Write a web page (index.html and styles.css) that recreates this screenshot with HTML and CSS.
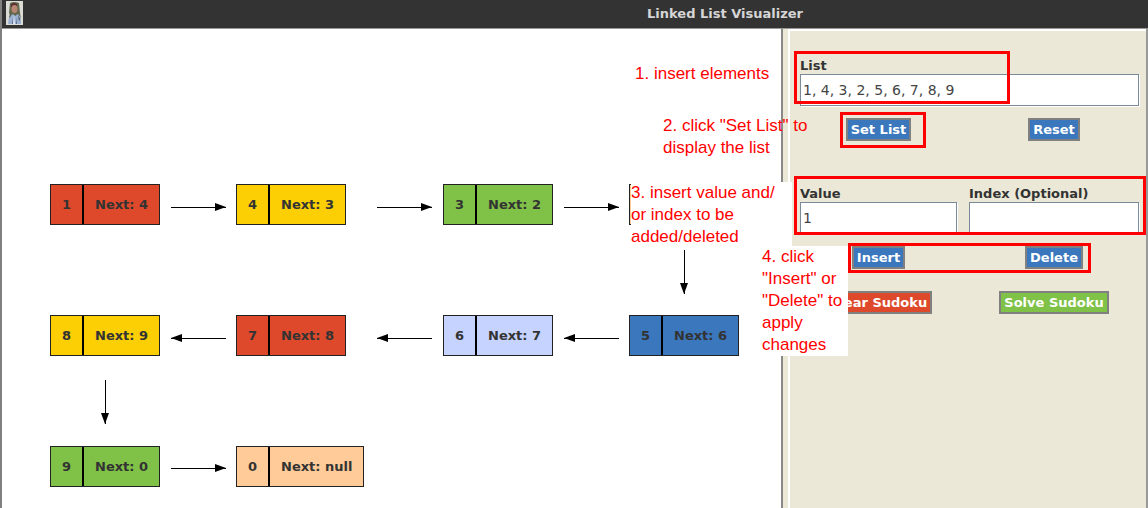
FILE: index.html
```
<!DOCTYPE html>
<html lang="en">
<head>
<meta charset="utf-8">
<title>Linked List Visualizer</title>
<link rel="stylesheet" href="styles.css">
</head>
<body>
<div class="window">
  <header class="titlebar">
    <svg class="portrait" viewBox="0 0 17 24" aria-hidden="true">
      <rect width="17" height="24" fill="#dcdcd6"/>
      <path d="M4 2Q8 0 13 2L14 12L15 18L12 16H5L3 12Z" fill="#62684d"/>
      <path d="M5 3Q8 1 11 3V6H5Z" fill="#5c3030"/>
      <ellipse cx="8.500" cy="8" rx="3" ry="4" fill="#b98573"/>
      <path d="M2 23L3 16L7 13L9 15L12 13L15 17V23Z" fill="#9db1d2"/>
      <path d="M4 13L5 15L3 17ZM12 14L14 18L13 20Z" fill="#3f4a49"/>
      <path d="M6 16L7 23H6ZM10 16L11 23H10Z" fill="#596985"/>
      <path d="M8 14L9 23H7Z" fill="#dfe6f3"/>
    </svg>
    <h1 class="title">Linked List Visualizer</h1>
  </header>
  <main class="content">
    <section class="canvas" aria-label="List diagram">
      <svg class="arrows" aria-hidden="true">
        <defs>
          <marker id="head" markerUnits="userSpaceOnUse" markerWidth="12" markerHeight="10" refX="11" refY="5" orient="auto"><path d="M0 1L11 5L0 9Z"/></marker>
        </defs>
        <g class="lines">
          <path d="M169 178H224" marker-end="url(#head)"/>
          <path d="M375 178H430" marker-end="url(#head)"/>
          <path d="M562 178H617" marker-end="url(#head)"/>
          <path d="M682 221V265" marker-end="url(#head)"/>
          <path d="M617 309H562" marker-end="url(#head)"/>
          <path d="M430 309H375" marker-end="url(#head)"/>
          <path d="M224 309H169" marker-end="url(#head)"/>
          <path d="M103 351V395" marker-end="url(#head)"/>
          <path d="M169 439H224" marker-end="url(#head)"/>
        </g>
      </svg>
      <div class="node row1 col1 red"><span>1</span><span>Next: 4</span></div>
      <div class="node row1 col2 yellow"><span>4</span><span>Next: 3</span></div>
      <div class="node row1 col3 green"><span>3</span><span>Next: 2</span></div>
      <div class="node row1 col4 peach"><span></span><span></span></div>
      <div class="node row2 col4 blue"><span>5</span><span>Next: 6</span></div>
      <div class="node row2 col3 lilac"><span>6</span><span>Next: 7</span></div>
      <div class="node row2 col2 red"><span>7</span><span>Next: 8</span></div>
      <div class="node row2 col1 yellow"><span>8</span><span>Next: 9</span></div>
      <div class="node row3 col1 green"><span>9</span><span>Next: 0</span></div>
      <div class="node row3 col2 peach"><span>0</span><span>Next: null</span></div>
      <p class="note note-1">1. insert elements</p>
      <p class="note note-2">2. click "Set List" to<br>display the list</p>
      <p class="note note-3">3. insert value and/<br>or index to be<br>added/deleted</p>
      <p class="note note-4">4. click<br>"Insert" or<br>"Delete" to<br>apply<br>changes</p>
    </section>
    <aside class="side">
      <form class="panel">
        <div class="field wide">
          <label for="list">List</label>
          <input id="list" type="text" value="1, 4, 3, 2, 5, 6, 7, 8, 9">
        </div>
        <button class="blue" type="button">Set List</button>
        <button class="blue" type="button">Reset</button>
        <div class="field lower">
          <label for="value">Value</label>
          <input id="value" type="text" value="1">
        </div>
        <div class="field lower">
          <label for="index">Index (Optional)</label>
          <input id="index" type="text">
        </div>
        <button class="blue" type="button">Insert</button>
        <button class="blue" type="button">Delete</button>
        <button class="red last" type="button">Clear Sudoku</button>
        <button class="green last" type="button">Solve Sudoku</button>
        <div class="mark mark-list"></div>
        <div class="mark mark-set"></div>
        <div class="mark mark-value"></div>
        <div class="mark mark-actions"></div>
      </form>
    </aside>
  </main>
</div>
</body>
</html>
```
FILE: styles.css
```
* { box-sizing: border-box; }
body {
  margin: 0;
  background: #fff;
  color: #333;
  font: bold 13px/16px "DejaVu Sans", sans-serif;
}
.window {
  display: flex;
  flex-direction: column;
  min-height: 100vh;
  border-left: 2px solid #808080;
}
.titlebar {
  display: flex;
  align-items: center;
  height: 28px;
  padding-left: 4px;
  background: #333;
}
.portrait { width: 17px; height: 24px; margin-bottom: 2px; }
.title {
  flex: 1;
  margin: 0;
  padding-left: 279px;
  color: #d6d6d6;
  font-size: 13px;
  text-align: center;
}
.content {
  display: flex;
  flex: 1;
  border-top: 1px solid #999;
}
.canvas {
  position: relative;
  z-index: 1;
  flex: 1;
  background: #fff;
}
.arrows { position: absolute; width: 100%; height: 100%; }
.lines { fill: none; stroke: #000; shape-rendering: crispEdges; }
marker path { fill: #000; stroke: none; shape-rendering: auto; }

.node {
  position: absolute;
  display: flex;
  min-width: 110px;
  height: 41px;
  border: 1px solid #222;
  line-height: 39px;
}
.node span:first-child {
  width: 33px;
  border-right: 2px solid #000;
  text-align: center;
}
.node span:last-child { flex: 1; padding: 0 11px; white-space: nowrap; }
.row1 { top: 155px; }
.row2 { top: 286px; }
.row3 { top: 417px; }
.col1 { left: 48px; }
.col2 { left: 234px; }
.col3 { left: 441px; }
.col4 { left: 627px; }

.red { background: #de492b; }
.yellow { background: #fbcf04; }
.green { background: #80c147; }
.blue { background: #3a77bd; }
.lilac { background: #c7d3ff; }
.peach { background: #ffcc99; }

.note {
  position: absolute;
  margin: 0;
  color: #f00;
  font: 17px/22px "Liberation Sans", sans-serif;
  white-space: nowrap;
}
.note-1 { top: 34px; left: 633px; }
.note-2 { top: 86px; left: 661px; }
.note-3 { top: 153px; left: 629px; width: 161px; height: 65px; background: #fff; }
.note-4 { top: 217px; left: 760px; width: 86px; background: #fff; }

.side {
  width: 367px;
  padding-left: 5px;
  border-left: 2px solid #888;
  border-right: 2px solid #999;
  background: #ebe8d7;
}
.panel {
  position: relative;
  display: grid;
  grid-template-columns: 157fr 170fr;
  gap: 12px;
  align-content: start;
  justify-items: center;
  height: 100%;
  padding: 27px 7px 0 10px;
  border-top: 2px solid #fff;
  border-left: 2px solid #fff;
}
.field { display: flex; flex-direction: column; width: 100%; }
.wide { grid-column: 1 / 3; }
.lower { margin-top: 33px; }
input {
  width: 100%;
  height: 32px;
  padding: 0 2px;
  border: 1px solid #7a8a99;
  border-radius: 0;
  outline: 0;
  background: #fff;
  box-shadow: 1px 1px #fff;
  color: #444;
  font: 14px/16px "DejaVu Sans", sans-serif;
}
button {
  height: 23px;
  padding: 0 3px;
  border: 2px solid #808080;
  border-radius: 0;
  color: #fff;
  font: bold 13px/16px "DejaVu Sans", sans-serif;
}
.last { margin-top: 10px; }

.mark { position: absolute; border: 3px solid #f00; pointer-events: none; }
.mark-list { top: 20px; left: 4px; width: 216px; height: 53px; }
.mark-set { top: 81px; left: 50px; width: 86px; height: 36px; }
.mark-value { top: 145px; left: 4px; right: 0; height: 59px; }
.mark-actions { top: 212px; left: 58px; width: 243px; height: 30px; }
```
